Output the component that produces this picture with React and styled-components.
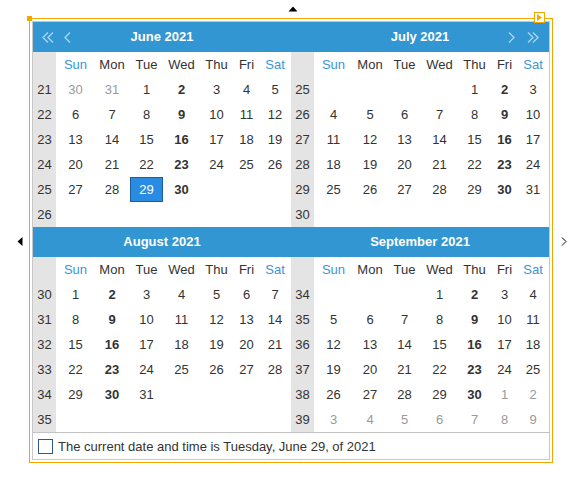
import React from "react";
import styled, { createGlobalStyle } from "styled-components";

const GlobalStyle = createGlobalStyle`
  html, body { margin: 0; padding: 0; background: #ffffff; }
  body { font-family: "Liberation Sans", Arial, sans-serif; font-size: 13px; color: #333333; }
`;

const Frame = styled.div`
  position: relative;
  box-sizing: border-box;
  width: 524px;
  height: 445px;
  margin: 18px 0 0 29px;
  border: 1px solid #f5a700;
  padding: 2px;
`;

const CornerHandle = styled.div`
  position: absolute;
  left: -3px;
  top: -3px;
  width: 5px;
  height: 5px;
  background: #f5a700;
`;

const ActionHandle = styled.div`
  position: absolute;
  left: 504px;
  top: -7px;
  width: 11px;
  height: 11px;
  box-sizing: border-box;
  border: 1px solid #f5a700;
  background: #ffffff;
  display: flex;
  align-items: center;
  justify-content: center;
`;

const Marker = styled.svg`
  position: absolute;
  overflow: visible;
  left: ${(p) => p.$x}px;
  top: ${(p) => p.$y}px;
`;

const Calendar = styled.div`
  box-sizing: border-box;
  width: 518px;
  height: 439px;
  border: 1px solid #c8c8c8;
  display: flex;
  flex-direction: column;
`;

const MonthsGrid = styled.div`
  display: grid;
  grid-template-columns: 258px 258px;
  grid-template-rows: 205px 205px;
`;

const Month = styled.div`
  display: flex;
  flex-direction: column;
`;

const Header = styled.div`
  height: 30px;
  background: #3196d1;
  display: grid;
  grid-template-columns: 1fr auto 1fr;
  align-items: center;
  color: #ffffff;
  font-weight: bold;
  font-size: 13px;
`;

const NavGroup = styled.div`
  display: flex;
  align-items: center;
  justify-content: ${(p) => (p.$end ? "flex-end" : "flex-start")};
  gap: ${(p) => p.$gap}px;
  padding: ${(p) => (p.$end ? "0 10px 0 0" : "0 0 0 9px")};
  height: 30px;
`;

const Title = styled.div`
  line-height: 30px;
  white-space: nowrap;
`;

const DayGrid = styled.div`
  display: grid;
  grid-template-columns: 23px 39px 34px 35px 35px 35px 25px 32px;
  grid-auto-rows: 25px;
`;

const WeekCell = styled.div`
  background: #e4e4e4;
  color: #333333;
  display: flex;
  align-items: center;
  justify-content: center;
`;

const DayName = styled.div`
  display: flex;
  align-items: center;
  justify-content: center;
  color: ${(p) => (p.$weekend ? "#3a95d8" : "#333333")};
`;

const DateCell = styled.div`
  display: flex;
  align-items: center;
  justify-content: center;
  box-sizing: border-box;
  color: ${(p) => (p.$selected ? "#ffffff" : p.$other ? "#9a9a9a" : "#333333")};
  font-weight: ${(p) => (p.$bold ? "bold" : "normal")};
  background: ${(p) => (p.$selected ? "#2a8be3" : "transparent")};
  border: ${(p) => (p.$selected ? "1px solid #1d5d9b" : "none")};
  margin: ${(p) => (p.$selected ? "0 1px" : "0")};
`;

const Footer = styled.div`
  border-top: 1px solid #c3c3c3;
  height: 26px;
  display: flex;
  align-items: center;
  gap: 5px;
  padding-left: 5px;
  color: #333333;
`;

const CheckBox = styled.div`
  width: 15px;
  height: 15px;
  box-sizing: border-box;
  border: 1px solid #2a5b8a;
  background: #ffffff;
`;

const NAV = "#a9d3f1";

const Chevron = ({ dir }) => (
  <svg width="7" height="11" viewBox="0 0 7 11">
    <polyline
      points={dir === "left" ? "6,0.5 1,5.5 6,10.5" : "1,0.5 6,5.5 1,10.5"}
      fill="none"
      stroke={NAV}
      strokeWidth="1.4"
    />
  </svg>
);

const DoubleChevron = ({ dir }) => (
  <svg width="12" height="11" viewBox="0 0 12 11">
    {dir === "left" ? (
      <>
        <polyline points="6,0.5 1,5.5 6,10.5" fill="none" stroke={NAV} strokeWidth="1.4" />
        <polyline points="11,0.5 6,5.5 11,10.5" fill="none" stroke={NAV} strokeWidth="1.4" />
      </>
    ) : (
      <>
        <polyline points="1,0.5 6,5.5 1,10.5" fill="none" stroke={NAV} strokeWidth="1.4" />
        <polyline points="6,0.5 11,5.5 6,10.5" fill="none" stroke={NAV} strokeWidth="1.4" />
      </>
    )}
  </svg>
);

const DAY_NAMES = ["Sun", "Mon", "Tue", "Wed", "Thu", "Fri", "Sat"];
const MONTH_NAMES = ["January", "February", "March", "April", "May", "June", "July", "August", "September", "October", "November", "December"];
const BOLD = [2, 9, 16, 23, 30];

function buildRows(year, month, leading, trailing) {
  const first = new Date(year, month, 1);
  const start = new Date(year, month, 1 - first.getDay());
  const rows = [];
  for (let r = 0; r < 6; r++) {
    const row = [];
    for (let c = 0; c < 7; c++) {
      const d = new Date(start.getFullYear(), start.getMonth(), start.getDate() + r * 7 + c);
      const m = d.getMonth();
      const isCur = m === month;
      const before = d < first;
      let show = isCur || (before && leading) || (!before && !isCur && trailing);
      row.push({
        day: d.getDate(),
        show,
        other: !isCur,
        bold: isCur && BOLD.includes(d.getDate()),
        selected: isCur && month === 5 && d.getDate() === 29,
      });
    }
    rows.push(row);
  }
  return rows;
}

const MONTHS = [
  { y: 2021, m: 5, weeks: [21, 22, 23, 24, 25, 26], leading: true, trailing: false, left: true },
  { y: 2021, m: 6, weeks: [25, 26, 27, 28, 29, 30], leading: false, trailing: false, right: true },
  { y: 2021, m: 7, weeks: [30, 31, 32, 33, 34, 35], leading: false, trailing: false },
  { y: 2021, m: 8, weeks: [34, 35, 36, 37, 38, 39], leading: false, trailing: true },
];

const MonthView = ({ info }) => {
  const rows = buildRows(info.y, info.m, info.leading, info.trailing);
  return (
    <Month>
      <Header>
        <NavGroup $gap={10}>
          {info.left && (
            <>
              <DoubleChevron dir="left" />
              <Chevron dir="left" />
            </>
          )}
        </NavGroup>
        <Title>
          {MONTH_NAMES[info.m]} {info.y}
        </Title>
        <NavGroup $end $gap={12}>
          {info.right && (
            <>
              <Chevron dir="right" />
              <DoubleChevron dir="right" />
            </>
          )}
        </NavGroup>
      </Header>
      <DayGrid>
        <WeekCell />
        {DAY_NAMES.map((n, i) => (
          <DayName key={n} $weekend={i === 0 || i === 6}>
            {n}
          </DayName>
        ))}
        {rows.map((row, r) => (
          <React.Fragment key={r}>
            <WeekCell>{info.weeks[r]}</WeekCell>
            {row.map((cell, c) => (
              <DateCell
                key={c}
                $other={cell.other}
                $bold={cell.bold}
                $selected={cell.selected}
              >
                {cell.show ? cell.day : ""}
              </DateCell>
            ))}
          </React.Fragment>
        ))}
      </DayGrid>
    </Month>
  );
};

export default function App() {
  return (
    <>
      <GlobalStyle />
      <Frame>
        <CornerHandle />
        <ActionHandle>
          <svg width="5" height="7" viewBox="0 0 5 7">
            <polygon points="0,0 5,3.5 0,7" fill="#f5a700" />
          </svg>
        </ActionHandle>
        <Marker $x={258} $y={-13} width="10" height="6" viewBox="0 0 10 6">
          <polygon points="0.5,5.5 5,0.5 9.5,5.5" fill="#000000" />
        </Marker>
        <Marker $x={-13} $y={218} width="6" height="9" viewBox="0 0 6 9">
          <polygon points="5.5,0 0.5,4.5 5.5,9" fill="#000000" />
        </Marker>
        <Marker $x={531} $y={218} width="6" height="9" viewBox="0 0 6 9">
          <polyline points="1,0.5 5,4.5 1,8.5" fill="none" stroke="#000000" strokeWidth="1" />
        </Marker>
        <Marker $x={257} $y={450} width="11" height="6" viewBox="0 0 11 6">
          <polyline points="0.5,0.5 5.5,5 10.5,0.5" fill="none" stroke="#000000" strokeWidth="1" />
        </Marker>
        <Calendar>
          <MonthsGrid>
            {MONTHS.map((info) => (
              <MonthView key={info.m} info={info} />
            ))}
          </MonthsGrid>
          <Footer>
            <CheckBox />
            <span>The current date and time is Tuesday, June 29, of 2021</span>
          </Footer>
        </Calendar>
      </Frame>
    </>
  );
}
